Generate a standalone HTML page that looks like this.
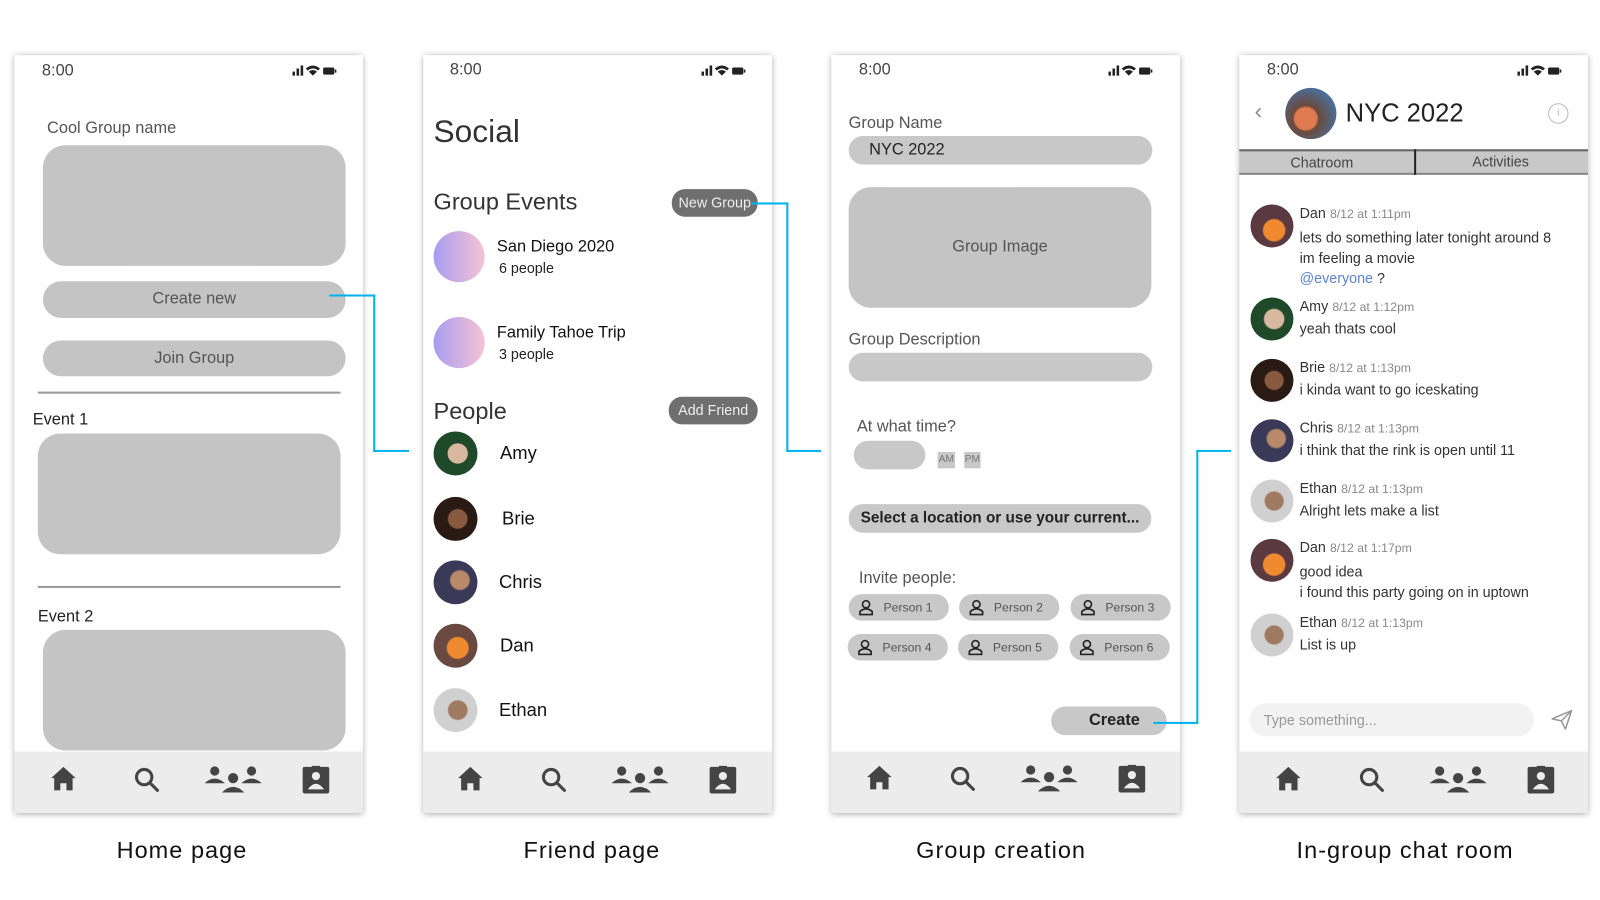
<!DOCTYPE html>
<html><head><meta charset="utf-8">
<style>
*{margin:0;padding:0;box-sizing:border-box}
body{width:1600px;height:900px;background:#fff;position:relative;overflow:hidden;font-family:"Liberation Sans",Arial,sans-serif;color:#333}
#w{position:absolute;left:0;top:0;width:1565px;height:880px;transform:scale(1.0225);transform-origin:0 0}
.a{position:absolute}
.ph{position:absolute;top:54px;width:341px;height:741px;background:#fff;box-shadow:0 1px 6px rgba(0,0,0,.35)}
.nav{position:absolute;left:0;bottom:0;width:100%;height:60px;background:#ececec}
.t{position:absolute;font-size:16px;color:#555;white-space:nowrap}
.box{position:absolute;background:#c4c4c4;border-radius:22px}
.pill{position:absolute;background:#c4c4c4;border-radius:18px;text-align:center;color:#555;font-size:16px}
.cap{position:absolute;top:818px;font-size:23px;color:#111;letter-spacing:1px;white-space:nowrap}
.cy{position:absolute;background:#00b4f0}
.av{position:absolute;border-radius:50%;overflow:hidden}
.chip{position:absolute;width:98px;height:26px;background:#c8c8c8;border-radius:13px;font-size:12px;color:#555;line-height:26px;padding-left:34px}
.chip svg{position:absolute;left:9px;top:5px}
.msg .n{font-size:14px;color:#333}
.msg .d{font-size:12px;color:#888;margin-left:4px}
</style></head><body><div id="w">

<svg width="0" height="0" style="position:absolute">
<defs>
<g id="nav">
<path d="M10 12 L22 1 L34 12 L31 12 L31 24 L25 24 L25 17 L19 17 L19 24 L13 24 L13 12 Z" fill="#444" transform="translate(26,0)"/>
<g transform="translate(118,2)" fill="none" stroke="#444" stroke-width="3"><circle cx="9" cy="9" r="7.5"/><path d="M14.5 14.5 L22 22" stroke-linecap="round"/></g>
<g transform="translate(186,0)" fill="#444"><circle cx="10" cy="5" r="4.5"/><path d="M0 17 Q10 8 20 17 Z"/><circle cx="46" cy="5" r="4.5"/><path d="M36 17 Q46 8 56 17 Z"/><circle cx="28" cy="12" r="5"/><path d="M17 26 Q28 15 39 26 Z"/></g>
<g transform="translate(282,-2)" fill="#444"><rect x="0" y="3" width="26" height="26" rx="2"/><rect x="9" y="0" width="8" height="5" rx="1"/><circle cx="13" cy="12" r="4" fill="#ececec"/><path d="M5 25 Q13 14 21 25 Z" fill="#ececec"/></g>
</g>
<g id="st">
<rect x="0" y="7" width="2.5" height="4" fill="#222"/><rect x="4" y="4" width="2.5" height="7" fill="#222"/><rect x="8" y="1" width="2.5" height="10" fill="#222"/>
<path d="M13 4 Q20 -2 27 4 L25 6 Q20 2 15 6 Z M16 7 Q20 4 24 7 L20 11 Z" fill="#222"/>
<rect x="30" y="3" width="11" height="7" rx="1.5" fill="#222"/><rect x="41.5" y="5" width="1.5" height="3" fill="#222"/>
</g>
<g id="pi"><circle cx="8" cy="5" r="3.5" fill="none" stroke="#222" stroke-width="1.6"/><path d="M2 15 L2 12 Q8 7 14 12 L14 15 Z" fill="none" stroke="#222" stroke-width="1.6"/></g>
</defs></svg>

<!-- PHONE 1 -->
<div class="ph" style="left:14px">
<div class="t" style="left:27px;top:7px;color:#444">8:00</div>
<svg class="a" style="left:272px;top:9px" width="44" height="12"><use href="#st"/></svg>
<div class="t" style="left:32px;top:63px">Cool Group name</div>
<div class="box" style="left:28px;top:88px;width:296px;height:118px"></div>
<div class="pill" style="left:28px;top:221px;width:296px;height:36px;line-height:36px">Create new</div>
<div class="pill" style="left:28px;top:279px;width:296px;height:35px;line-height:35px">Join Group</div>
<div class="a" style="left:23px;top:329px;width:296px;height:2px;background:#999"></div>
<div class="t" style="left:18px;top:348px;color:#222">Event 1</div>
<div class="box" style="left:23px;top:370px;width:296px;height:118px"></div>
<div class="a" style="left:23px;top:519px;width:296px;height:2px;background:#999"></div>
<div class="t" style="left:23px;top:541px;color:#222">Event 2</div>
<div class="box" style="left:28px;top:562px;width:296px;height:118px"></div>
<div class="nav"><svg class="a" style="left:0px;top:14px" width="330" height="34"><use href="#nav"/></svg></div>
</div>

<!-- PHONE 2 -->
<div class="ph" style="left:414px">
<div class="t" style="left:26px;top:6px;color:#444">8:00</div>
<svg class="a" style="left:272px;top:9px" width="44" height="12"><use href="#st"/></svg>
<div class="t" style="left:10px;top:57px;font-size:31px;color:#333">Social</div>
<div class="t" style="left:10px;top:130px;font-size:23px;color:#333">Group Events</div>
<div class="a" style="left:243px;top:131px;width:84px;height:27px;background:#6f6f6f;border-radius:13px;color:#eee;font-size:14px;line-height:27px;text-align:center">New Group</div>
<div class="av" style="left:10px;top:172px;width:50px;height:50px;background:linear-gradient(90deg,#a89cf0,#f6c3d3)"></div>
<div class="t" style="left:72px;top:179px;color:#111">San Diego 2020</div>
<div class="t" style="left:74px;top:200px;color:#222;font-size:14px">6 people</div>
<div class="av" style="left:10px;top:256px;width:50px;height:50px;background:linear-gradient(90deg,#a89cf0,#f6c3d3)"></div>
<div class="t" style="left:72px;top:263px;color:#111">Family Tahoe Trip</div>
<div class="t" style="left:74px;top:284px;color:#222;font-size:14px">3 people</div>
<div class="t" style="left:10px;top:335px;font-size:23px;color:#333">People</div>
<div class="a" style="left:240px;top:334px;width:87px;height:27px;background:#6f6f6f;border-radius:13px;color:#eee;font-size:14px;line-height:27px;text-align:center">Add Friend</div>
<div class="av" style="left:10px;top:368px;width:43px;height:43px;background:radial-gradient(circle at 55% 50%,#d9b8a0 0 30%,#1f4a2a 32%)"></div>
<div class="t" style="left:75px;top:379px;font-size:18px;color:#111">Amy</div>
<div class="av" style="left:10px;top:432px;width:43px;height:43px;background:radial-gradient(circle at 55% 50%,#8a5a40 0 28%,#2a1a14 32%)"></div>
<div class="t" style="left:77px;top:443px;font-size:18px;color:#111">Brie</div>
<div class="av" style="left:10px;top:494px;width:43px;height:43px;background:radial-gradient(circle at 60% 45%,#b88a6a 0 25%,#3a3a58 30%)"></div>
<div class="t" style="left:74px;top:505px;font-size:18px;color:#111">Chris</div>
<div class="av" style="left:10px;top:556px;width:43px;height:43px;background:radial-gradient(circle at 55% 55%,#f08a30 0 30%,#6a4a40 34%)"></div>
<div class="t" style="left:75px;top:567px;font-size:18px;color:#111">Dan</div>
<div class="av" style="left:10px;top:619px;width:43px;height:43px;background:radial-gradient(circle at 55% 50%,#a07a60 0 28%,#d0d0d0 32%)"></div>
<div class="t" style="left:74px;top:630px;font-size:18px;color:#111">Ethan</div>
<div class="nav"><svg class="a" style="left:-2px;top:14px" width="330" height="34"><use href="#nav"/></svg></div>
</div>

<!-- PHONE 3 -->
<div class="ph" style="left:813px">
<div class="t" style="left:27px;top:6px;color:#444">8:00</div>
<svg class="a" style="left:271px;top:9px" width="44" height="12"><use href="#st"/></svg>
<div class="t" style="left:17px;top:58px">Group Name</div>
<div class="a" style="left:17px;top:79px;width:297px;height:28px;background:#c8c8c8;border-radius:14px;font-size:16px;color:#222;line-height:28px;padding-left:20px">NYC 2022</div>
<div class="box" style="left:17px;top:129px;width:296px;height:118px;text-align:center;line-height:118px;font-size:16px;color:#555">Group Image</div>
<div class="t" style="left:17px;top:270px">Group Description</div>
<div class="a" style="left:17px;top:291px;width:297px;height:28px;background:#c8c8c8;border-radius:14px"></div>
<div class="t" style="left:25px;top:355px">At what time?</div>
<div class="a" style="left:22px;top:377px;width:70px;height:28px;background:#c8c8c8;border-radius:14px"></div>
<div class="a" style="left:104px;top:388px;width:17px;height:16px;background:#c8c8c8;font-size:10px;color:#777;line-height:16px;text-align:center">AM</div>
<div class="a" style="left:130px;top:388px;width:16px;height:16px;background:#c8c8c8;font-size:10px;color:#777;line-height:16px;text-align:center">PM</div>
<div class="a" style="left:17px;top:439px;width:296px;height:28px;background:#c8c8c8;border-radius:14px;font-size:15px;font-weight:bold;color:#222;line-height:28px;text-align:center">Select a location or use your current...</div>
<div class="t" style="left:27px;top:503px">Invite people:</div>
<div class="chip" style="left:17px;top:527px"><svg width="16" height="16"><use href="#pi"/></svg>Person 1</div>
<div class="chip" style="left:125px;top:527px"><svg width="16" height="16"><use href="#pi"/></svg>Person 2</div>
<div class="chip" style="left:234px;top:527px"><svg width="16" height="16"><use href="#pi"/></svg>Person 3</div>
<div class="chip" style="left:16px;top:566px"><svg width="16" height="16"><use href="#pi"/></svg>Person 4</div>
<div class="chip" style="left:124px;top:566px"><svg width="16" height="16"><use href="#pi"/></svg>Person 5</div>
<div class="chip" style="left:233px;top:566px"><svg width="16" height="16"><use href="#pi"/></svg>Person 6</div>
<div class="a" style="left:215px;top:637px;width:113px;height:28px;background:#c8c8c8;border-radius:14px;font-size:16px;font-weight:bold;color:#222;line-height:28px;padding-left:37px">Create</div>
<div class="nav"><svg class="a" style="left:-1px;top:13px" width="330" height="34"><use href="#nav"/></svg></div>
</div>

<!-- PHONE 4 -->
<div class="ph" style="left:1212px">
<div class="t" style="left:27px;top:6px;color:#444">8:00</div>
<svg class="a" style="left:272px;top:9px" width="44" height="12"><use href="#st"/></svg>
<div class="t" style="left:15px;top:42px;font-size:22px;color:#888">‹</div>
<div class="av" style="left:45px;top:32px;width:50px;height:50px;background:radial-gradient(circle at 40% 60%,#e07a50 0 25%,#6a4a3a 30%,#4a70a0 75%)"></div>
<div class="t" style="left:104px;top:43px;font-size:25px;color:#222">NYC 2022</div>
<div class="a" style="left:302px;top:47px;width:20px;height:20px;border:1.5px solid #bbb;border-radius:50%;font-size:10px;color:#aaa;text-align:center;line-height:17px">i</div>
<div class="a" style="left:0;top:92px;width:341px;height:25px;background:#c8c8c8;border-top:2px solid #666;border-bottom:2px solid #888"></div>
<div class="a" style="left:171px;top:92px;width:1.5px;height:25px;background:#222"></div>
<div class="t" style="left:50px;top:97px;font-size:14px;color:#444">Chatroom</div>
<div class="t" style="left:228px;top:96px;font-size:14px;color:#444">Activities</div>

<div class="msg">
<div class="av" style="left:11px;top:146px;width:42px;height:42px;background:radial-gradient(circle at 55% 60%,#f08a30 0 30%,#5a3a40 34%)"></div>
<div class="t" style="left:59px;top:146px"><span class="n">Dan</span><span class="d">8/12 at 1:11pm</span></div>
<div class="t" style="left:59px;top:168px;font-size:14px;color:#333;line-height:20px">lets do something later tonight around 8<br>im feeling a movie<br><span style="color:#5a82d0">@everyone</span> ?</div>

<div class="av" style="left:11px;top:237px;width:42px;height:42px;background:radial-gradient(circle at 55% 50%,#d9b8a0 0 30%,#1f4a2a 34%)"></div>
<div class="t" style="left:59px;top:237px"><span class="n">Amy</span><span class="d">8/12 at 1:12pm</span></div>
<div class="t" style="left:59px;top:259px;font-size:14px;color:#333">yeah thats cool</div>

<div class="av" style="left:11px;top:297px;width:42px;height:42px;background:radial-gradient(circle at 55% 50%,#8a5a40 0 28%,#2a1a14 32%)"></div>
<div class="t" style="left:59px;top:297px"><span class="n">Brie</span><span class="d">8/12 at 1:13pm</span></div>
<div class="t" style="left:59px;top:319px;font-size:14px;color:#333">i kinda want to go iceskating</div>

<div class="av" style="left:11px;top:356px;width:42px;height:42px;background:radial-gradient(circle at 60% 45%,#b88a6a 0 25%,#3a3a58 30%)"></div>
<div class="t" style="left:59px;top:356px"><span class="n">Chris</span><span class="d">8/12 at 1:13pm</span></div>
<div class="t" style="left:59px;top:378px;font-size:14px;color:#333">i think that the rink is open until 11</div>

<div class="av" style="left:11px;top:415px;width:42px;height:42px;background:radial-gradient(circle at 55% 50%,#a07a60 0 28%,#d0d0d0 32%)"></div>
<div class="t" style="left:59px;top:415px"><span class="n">Ethan</span><span class="d">8/12 at 1:13pm</span></div>
<div class="t" style="left:59px;top:437px;font-size:14px;color:#333">Alright lets make a list</div>

<div class="av" style="left:11px;top:473px;width:42px;height:42px;background:radial-gradient(circle at 55% 60%,#f08a30 0 30%,#5a3a40 34%)"></div>
<div class="t" style="left:59px;top:473px"><span class="n">Dan</span><span class="d">8/12 at 1:17pm</span></div>
<div class="t" style="left:59px;top:495px;font-size:14px;line-height:20px;color:#333">good idea<br>i found this party going on in uptown</div>

<div class="av" style="left:11px;top:546px;width:42px;height:42px;background:radial-gradient(circle at 55% 50%,#a07a60 0 28%,#d0d0d0 32%)"></div>
<div class="t" style="left:59px;top:546px"><span class="n">Ethan</span><span class="d">8/12 at 1:13pm</span></div>
<div class="t" style="left:59px;top:568px;font-size:14px;color:#333">List is up</div>
</div>

<div class="a" style="left:10px;top:634px;width:278px;height:32px;background:#f2f2f2;border-radius:16px;font-size:14px;color:#999;line-height:32px;padding-left:14px">Type something...</div>
<svg class="a" style="left:305px;top:640px" width="22" height="20"><path d="M1 9 L20 1 L14 19 L10 11 Z M10 11 L20 1" fill="none" stroke="#999" stroke-width="1.5" stroke-linejoin="round"/></svg>
<div class="nav"><svg class="a" style="left:0px;top:14px" width="330" height="34"><use href="#nav"/></svg></div>
</div>

<!-- connectors on top -->
<div class="cy" style="left:322px;top:288px;width:45px;height:2px"></div>
<div class="cy" style="left:365px;top:288px;width:2px;height:154px"></div>
<div class="cy" style="left:365px;top:440px;width:35px;height:2px"></div>
<div class="cy" style="left:735px;top:198px;width:36px;height:2px"></div>
<div class="cy" style="left:769px;top:198px;width:2px;height:244px"></div>
<div class="cy" style="left:769px;top:440px;width:34px;height:2px"></div>
<div class="cy" style="left:1128px;top:706px;width:44px;height:2px"></div>
<div class="cy" style="left:1170px;top:440px;width:2px;height:268px"></div>
<div class="cy" style="left:1170px;top:440px;width:34px;height:2px"></div>

<div class="cap" style="left:114px">Home page</div>
<div class="cap" style="left:512px">Friend page</div>
<div class="cap" style="left:896px">Group creation</div>
<div class="cap" style="left:1268px">In-group chat room</div>
</div></body></html>
